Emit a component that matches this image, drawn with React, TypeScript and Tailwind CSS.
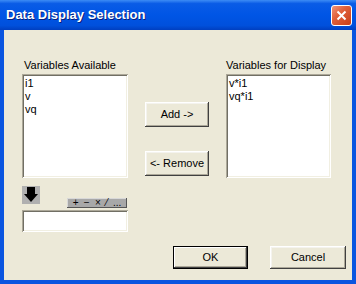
import React from "react";

const FONT = { fontFamily: '"Liberation Sans", Arial, sans-serif' };

function ClassicButton({
  label,
  className,
  isDefault,
}: {
  label: string;
  className: string;
  isDefault?: boolean;
}) {
  return (
    <div
      className={
        "flex items-center justify-center bg-[#ece9d8] text-[11px] text-black " +
        (isDefault
          ? "border border-black shadow-[inset_-1px_-1px_#404040,inset_1px_1px_#fff,inset_-2px_-2px_#aca899] "
          : "shadow-[inset_-1px_-1px_#404040,inset_1px_1px_#fff,inset_-2px_-2px_#aca899,inset_2px_2px_#f4f3ee] ") +
        className
      }
    >
      {label}
    </div>
  );
}

function ListBox({ items, className }: { items: string[]; className: string }) {
  return (
    <div
      className={
        "bg-white pl-[3px] pt-[3px] text-[11px] leading-[13px] text-black shadow-[inset_1px_1px_#aca899,inset_-1px_-1px_#fff,inset_2px_2px_#716f64,inset_-2px_-2px_#f1efe2] " +
        className
      }
    >
      {items.map((it) => (
        <div key={it}>{it}</div>
      ))}
    </div>
  );
}

function DownArrow() {
  return (
    <svg width="18" height="18" viewBox="0 0 18 18">
      <rect x="0" y="0" width="18" height="18" fill="#b0b0b0" />
      <polygon points="5,1 13,1 13,8 16,8 9,16 2,8 5,8" fill="#000" />
    </svg>
  );
}

export default function App() {
  return (
    <div className="w-[356px] h-[284px] flex flex-col bg-[#0a55e0]" style={FONT}>
      {/* title bar */}
      <div className="h-[30px] flex items-center justify-between pl-[6px] pr-[4px] bg-[linear-gradient(to_bottom,#3d8cf5_0%,#0a5ce6_12%,#0055e5_50%,#0050dc_85%,#003fc0_100%)]">
        <span className="text-[13px] font-bold text-white [text-shadow:1px_1px_#0a1e7a]">
          Data Display Selection
        </span>
        <div className="w-[21px] h-[21px] rounded-[3px] border border-white bg-[linear-gradient(135deg,#f0957a_0%,#e0603a_40%,#c83e18_100%)] flex items-center justify-center">
          <svg width="11" height="11" viewBox="0 0 11 11">
            <path d="M1.5 1.5 L9.5 9.5 M9.5 1.5 L1.5 9.5" stroke="#fff" strokeWidth="2" />
          </svg>
        </div>
      </div>

      {/* body */}
      <div className="flex-1 mx-[4px] mb-[4px] bg-[#ece9d8] flex flex-col pl-[18px] pt-[29px] text-black">
        <div className="flex">
          <div className="w-[106px] flex flex-col">
            <div className="h-[15px] text-[11px] leading-[13px] pl-[2px]">Variables Available</div>
            <ListBox items={["i1", "v", "vq"]} className="h-[104px]" />
          </div>
          <div className="ml-[17px] w-[64px] flex flex-col pt-[43px] gap-[24px]">
            <ClassicButton label="Add ->" className="h-[25px]" />
            <ClassicButton label="<- Remove" className="h-[25px]" />
          </div>
          <div className="ml-[17px] w-[105px] flex flex-col">
            <div className="h-[15px] text-[11px] leading-[13px]">Variables for Display</div>
            <ListBox items={["v*i1", "vq*i1"]} className="h-[104px]" />
          </div>
        </div>

        <div className="w-[106px] mt-[8px] flex flex-col">
          <div className="h-[22px] flex items-start">
            <DownArrow />
            <div className="ml-auto mr-[1px] mt-[12px] h-[10px] w-[60px] bg-[#a8a8a8] shadow-[inset_-1px_-1px_#555,inset_1px_1px_#d8d8d8] flex items-center justify-around px-[3px] text-[10px] leading-[10px] text-black">
              <span>+</span>
              <span>−</span>
              <span>×</span>
              <span>⁄</span>
              <span>...</span>
            </div>
          </div>
          <div className="mt-[2px] h-[22px] bg-white shadow-[inset_1px_1px_#aca899,inset_-1px_-1px_#fff,inset_2px_2px_#716f64,inset_-2px_-2px_#f1efe2]" />
        </div>

        <div className="mt-[14px] flex justify-end gap-[22px] pr-[6px]">
          <ClassicButton label="OK" className="w-[75px] h-[23px]" isDefault />
          <ClassicButton label="Cancel" className="w-[76px] h-[23px]" />
        </div>
      </div>
    </div>
  );
}
